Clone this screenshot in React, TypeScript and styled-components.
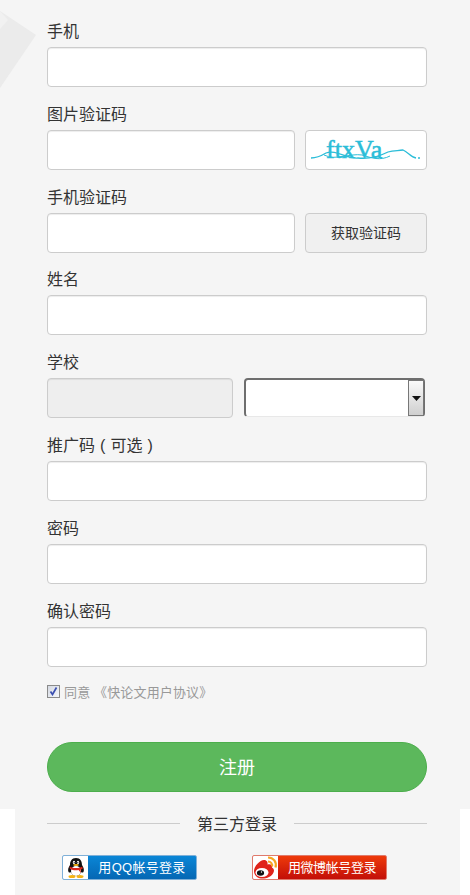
import styled, { createGlobalStyle } from "styled-components";

const fontStack = `"Liberation Sans", "Noto Sans CJK SC", sans-serif`;

const GlobalStyle = createGlobalStyle`
  html, body {
    margin: 0;
    padding: 0;
    background: #fff;
    font-family: ${fontStack};
  }
  * { box-sizing: border-box; }
`;

function App() {
  return (
    <Page>
      <GlobalStyle />
      <FormPanel>
        <Watermark width="40" height="90" viewBox="0 0 40 90">
          <path d="M0 11 L36 35 L0 88 Z" fill="#ebebeb" />
          <path d="M0 11 L8 20 L0 29 Z" fill="#f1f1f1" />
        </Watermark>
        <Field>
          <Label>手机</Label>
          <TextInput />
        </Field>
        <Field>
          <Label>图片验证码</Label>
          <Row>
            <ShortInput />
            <Captcha>
              <svg width="120" height="38" viewBox="0 0 120 38">
                <path
                  d="M5 27 C11 27 15 25 20 22 C30 18 40 28 52 27 C62 28 72 26 82 21 C88 19 92 20 97 19 C102 21 105 26 110 27 M112 27 L114 27"
                  fill="none"
                  stroke="#2bbdd8"
                  strokeWidth="1.3"
                />
                <path
                  d="M18 24 C30 30 44 22 56 24 C66 27 74 30 84 25"
                  fill="none"
                  stroke="#2bbdd8"
                  strokeWidth="1"
                />
                <CaptchaText x="20" y="27">ftxVa</CaptchaText>
              </svg>
            </Captcha>
          </Row>
        </Field>
        <Field>
          <Label>手机验证码</Label>
          <Row>
            <ShortInput />
            <CodeButton type="button">获取验证码</CodeButton>
          </Row>
        </Field>
        <Field>
          <Label>姓名</Label>
          <TextInput />
        </Field>
        <Field>
          <Label>学校</Label>
          <Row>
            <SchoolInput disabled />
            <SelectBox>
              <SelectArrow>
                <svg width="9" height="5" viewBox="0 0 9 5">
                  <path d="M0 0 H9 L4.5 5 Z" fill="#111" />
                </svg>
              </SelectArrow>
            </SelectBox>
          </Row>
        </Field>
        <Field>
          <PromoLabel>推广码 ( 可选 )</PromoLabel>
          <TextInput />
        </Field>
        <Field>
          <Label>密码</Label>
          <TextInput type="password" />
        </Field>
        <Field>
          <Label>确认密码</Label>
          <TextInput type="password" />
        </Field>
        <AgreeRow>
          <CheckBox>
            <svg width="9" height="9" viewBox="0 0 9 9">
              <path d="M1.5 4.5 L3.5 7.5 L7.5 0.5" fill="none" stroke="#3b4fb0" strokeWidth="1.7" />
            </svg>
          </CheckBox>
          同意 《快论文用户协议》
        </AgreeRow>
        <SubmitButton type="button">注册</SubmitButton>
      </FormPanel>
      <ThirdParty>
        <DividerRow>
          <DividerLine />
          <DividerText>第三方登录</DividerText>
          <DividerLine />
        </DividerRow>
        <SocialRow>
          <SocialButton $brand="qq">
            <SocialIcon>
              <svg width="22" height="22" viewBox="0 0 22 22">
                <path d="M11 1 C15.5 1 17 4.5 17 8 C18.5 10 19.5 13 18.5 15 C17.5 16 16.5 15.5 16 15 C15 18 13 19 11 19 C9 19 7 18 6 15 C5.5 15.5 4.5 16 3.5 15 C2.5 13 3.5 10 5 8 C5 4.5 6.5 1 11 1 Z" fill="#111" />
                <ellipse cx="11" cy="14" rx="5" ry="5" fill="#fff" />
                <ellipse cx="9" cy="5.5" rx="1.2" ry="1.7" fill="#fff" />
                <ellipse cx="13" cy="5.5" rx="1.2" ry="1.7" fill="#fff" />
                <circle cx="9.2" cy="5.7" r="0.6" fill="#111" />
                <circle cx="12.8" cy="5.7" r="0.6" fill="#111" />
                <ellipse cx="11" cy="8" rx="2.8" ry="1" fill="#f5b312" />
                <path d="M4.5 9.5 C8.5 11.5 13.5 11.5 17.5 9.5 L17.5 12 L15.5 12.5 L16 16 L13.5 13 C11 13.5 8 13.5 5 12 Z" fill="#d9261c" />
                <ellipse cx="7" cy="19.5" rx="3.5" ry="1.5" fill="#f5b312" />
                <ellipse cx="15" cy="19.5" rx="3.5" ry="1.5" fill="#f5b312" />
              </svg>
            </SocialIcon>
            <SocialLabel $brand="qq">用QQ帐号登录</SocialLabel>
          </SocialButton>
          <SocialButton $brand="weibo">
            <SocialIcon>
              <svg width="25" height="24" viewBox="0 0 25 24">
                <path d="M1 15 C1 10 7 4 11 4 C14 4 15 6.5 14.5 8.5 C17.5 7.5 19.5 9 19 11.5 C21 12.5 21.5 14.5 20.5 16.5 C18.5 21 13 23 8 22.5 C4 22 1 19 1 15 Z" fill="#e0241b" />
                <ellipse cx="9" cy="16.5" rx="6.5" ry="4.6" fill="#fff" />
                <ellipse cx="7.5" cy="17" rx="3.6" ry="2.8" fill="#111" />
                <circle cx="8.5" cy="16" r="0.7" fill="#fff" />
                <path d="M15 1.5 C20.5 1.5 24 6 22.5 11.5" fill="none" stroke="#f5a623" strokeWidth="2.2" />
                <path d="M15 5.5 C18 5.5 19.8 8 19 10.5" fill="none" stroke="#f5a623" strokeWidth="2" />
              </svg>
            </SocialIcon>
            <SocialLabel $brand="weibo">用微博帐号登录</SocialLabel>
          </SocialButton>
        </SocialRow>
      </ThirdParty>
    </Page>
  );
}

const Page = styled.div`
  width: 470px;
  height: 895px;
  overflow: hidden;
  background: #fff;
`;

const FormPanel = styled.div`
  position: relative;
  height: 809px;
  padding: 20px 43px 0 47px;
  background: #f5f5f5;
`;

const Watermark = styled.svg`
  position: absolute;
  left: 0;
  top: 0;
`;

const Field = styled.div`
  position: relative;
  height: 82.8px;
`;

const Label = styled.div`
  height: 27px;
  line-height: 24px;
  font-size: 16px;
  color: #333;
`;

const PromoLabel = styled(Label)`
  word-spacing: 0.6px;
`;

const TextInput = styled.input`
  display: block;
  width: 380px;
  height: 40px;
  padding: 0 12px;
  background: #fff;
  border: 1px solid #ccc;
  border-radius: 4px;
  box-shadow: inset 0 1px 1px rgba(0, 0, 0, 0.075);
  outline: none;
`;

const Row = styled.div`
  display: flex;
  width: 380px;
  justify-content: space-between;
`;

const ShortInput = styled(TextInput)`
  width: 248px;
`;

const SchoolInput = styled(TextInput)`
  width: 186px;
  background: #eee;
`;

const Captcha = styled.div`
  display: flex;
  align-items: center;
  justify-content: center;
  width: 122px;
  height: 40px;
  background: #fff;
  border: 1px solid #ccc;
  border-radius: 4px;
`;

const CaptchaText = styled.text`
  font-family: "Liberation Serif", serif;
  font-size: 26px;
  fill: #2bbdd8;
  stroke: #2bbdd8;
  stroke-width: 0.5px;
`;

const CodeButton = styled.button`
  width: 122px;
  height: 40px;
  padding: 0 0 2px;
  background: #f0f0f0;
  border: 1px solid #ccc;
  border-radius: 4px;
  font-family: ${fontStack};
  font-size: 14px;
  color: #333;
`;

const SelectBox = styled.div`
  position: relative;
  width: 181px;
  height: 39px;
  margin-right: 2px;
  background: #fff;
  border-style: solid;
  border-width: 2px 1px 1px 2px;
  border-color: #6e6e6e #6e6e6e #e8e8e8 #6e6e6e;
  border-radius: 4px;
`;

const SelectArrow = styled.div`
  position: absolute;
  right: 0;
  top: 0;
  bottom: 0;
  width: 16px;
  display: flex;
  align-items: center;
  justify-content: center;
  background: linear-gradient(#fafafa, #cfcfcf);
  border: 1px solid #777;
`;

const AgreeRow = styled.label`
  display: flex;
  align-items: center;
  height: 22px;
  margin-top: -1.4px;
  font-size: 13px;
  letter-spacing: 0.15px;
  color: #999;
`;

const CheckBox = styled.span`
  display: flex;
  align-items: center;
  justify-content: center;
  width: 13px;
  height: 13px;
  margin-right: 4px;
  background: linear-gradient(135deg, #d5d9e2, #f4f6fb);
  border: 1px solid #8a8a8a;
`;

const SubmitButton = styled.button`
  display: block;
  width: 380px;
  height: 50px;
  margin-top: 39px;
  padding: 0 0 2px;
  background: #5cb85c;
  border: 1px solid #4cae4c;
  border-radius: 25px;
  font-family: ${fontStack};
  font-size: 18px;
  color: #fff;
`;

const ThirdParty = styled.div`
  height: 86px;
  margin: 0 10px 0 15px;
  padding: 3px 33px 0 32px;
  background: #f5f5f5;
`;

const DividerRow = styled.div`
  display: flex;
  align-items: center;
  gap: 17px;
  height: 23px;
`;

const DividerLine = styled.div`
  flex: 1;
  height: 1px;
  background: #ccc;
`;

const DividerText = styled.span`
  padding-bottom: 2px;
  font-size: 16px;
  color: #333;
`;

const SocialRow = styled.div`
  display: flex;
  gap: 55px;
  margin: 20px 0 0 15px;
`;

const SocialButton = styled.div<{ $brand: "qq" | "weibo" }>`
  display: flex;
  width: 135px;
  height: 25px;
  overflow: hidden;
  border-radius: 2px;
  border: 1px solid ${(p) => (p.$brand === "qq" ? "#7fb0d8" : "#e07a6c")};
  background: ${(p) =>
    p.$brand === "qq"
      ? "linear-gradient(#0a86d6, #0567b4)"
      : "linear-gradient(#ee3a0a, #c30f08)"};
`;

const SocialIcon = styled.div`
  display: flex;
  align-items: center;
  justify-content: center;
  width: 25px;
  flex: none;
  background: #fff;
`;

const SocialLabel = styled.span<{ $brand: "qq" | "weibo" }>`
  flex: 1;
  text-align: center;
  line-height: 23px;
  font-size: 13px;
  letter-spacing: ${(p) => (p.$brand === "qq" ? "0.3px" : "-0.4px")};
  color: #fff;
`;

export default App;
